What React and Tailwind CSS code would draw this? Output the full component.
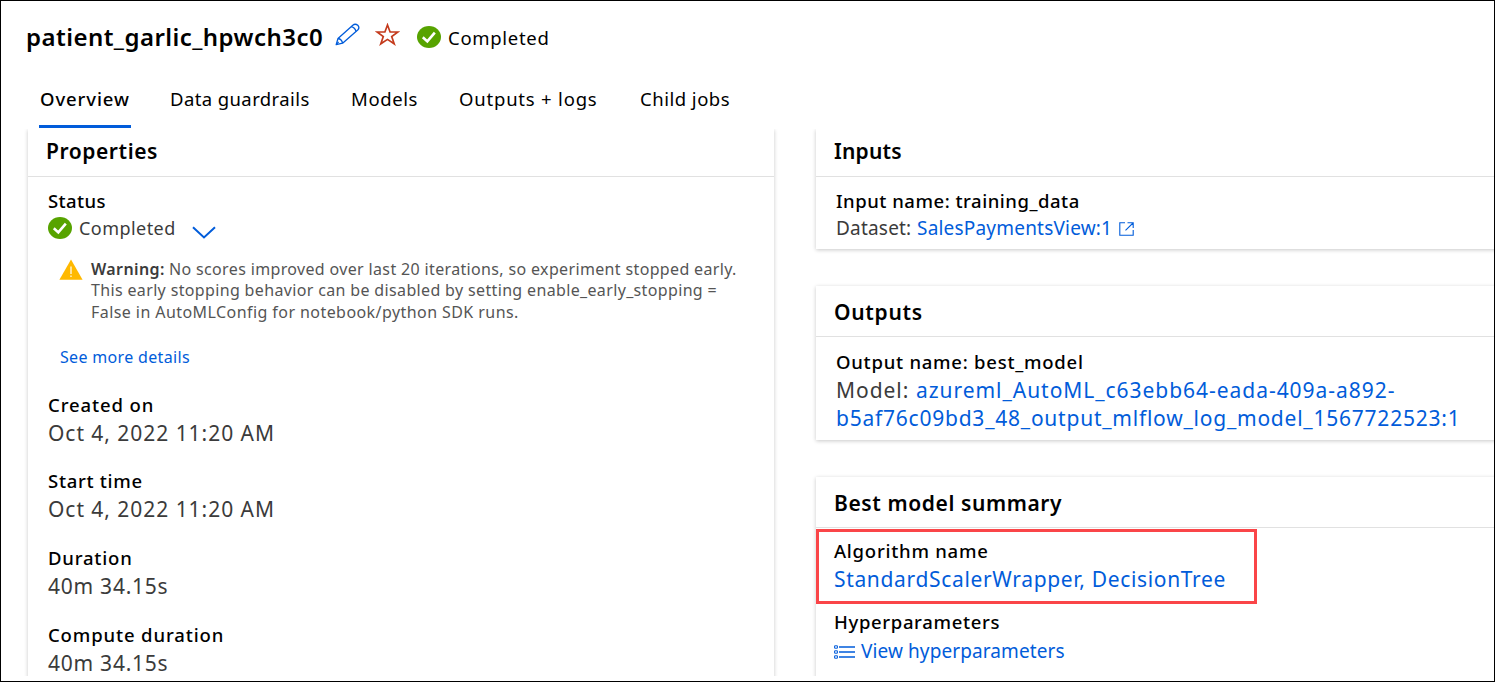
import React from "react";

function Check({ className }) {
  return (
    <svg viewBox="0 0 24 22" preserveAspectRatio="none" className={"shrink-0 " + className}>
      <ellipse cx="12" cy="11" rx="12" ry="11" fill="#57a300" />
      <path d="M5.8 11.3 L10.3 15.4 L17.8 6.6" fill="none" stroke="#fff" strokeWidth="2.6" />
    </svg>
  );
}

function Card({ title, spacing, className, children }) {
  return (
    <section className={"bg-white shadow-[0_1px_4px_rgba(0,0,0,0.22)] " + className}>
      <h2 className={"flex items-center border-b border-[#e1e1e1] pl-[18px] text-[21px] font-semibold " + spacing}>{title}</h2>
      {children}
    </section>
  );
}

function Property({ label, labelSpacing, value, valueSpacing }) {
  return (
    <div>
      <div className={"h-7 text-[18.5px] leading-[27px] font-medium " + labelSpacing}>{label}</div>
      <div className={"h-7 text-[21px] leading-[29px] text-[#3b3b3b] " + valueSpacing}>{value}</div>
    </div>
  );
}

export default function App() {
  return (
    <div className="flex h-[682px] w-[1495px] flex-col overflow-hidden border border-black bg-white pb-[5px] font-['Noto_Sans','Open_Sans',sans-serif] whitespace-nowrap text-black">
      <header className="flex h-[73px] shrink-0 pl-[25px]">
        <h1 className="mt-[18px] h-9 w-[309px] text-[24px] leading-9 font-semibold tracking-[0.45px]">patient_garlic_hpwch3c0</h1>
        <svg viewBox="0 0 25 23" className="mt-[22px] h-[23px] w-[25px]" fill="none" stroke="#015cda" strokeWidth="1.3" strokeLinejoin="round">
          <path d="M1.2 21.6 L3 15.5 L17.8 2.2 Q20.2 0.2 22.8 2.3 Q25 4.7 22.7 7 L7.6 20.2 Z" />
          <path d="M3 15.5 Q6.8 16.2 7.6 20.2 M16.2 3.6 Q20 4.6 21 8.4 M1.4 21.4 L3.6 18.8" />
        </svg>
        <svg viewBox="0 0 25 23" className="mt-[22px] ml-[15px] h-[23px] w-[25px]" fill="none" stroke="#c43a1c" strokeWidth="1.7">
          <path d="M12.5 2 L15.1 9 L23 9 L16.7 13.6 L19.2 20.8 L12.5 16.4 L5.8 20.8 L8.3 13.6 L2 9 L9.9 9 Z" />
        </svg>
        <Check className="mt-[25px] ml-[17px] h-[22px] w-[24px]" />
        <span className="mt-[23px] ml-[7px] text-[18.5px] leading-7 tracking-[0.7px]">Completed</span>
      </header>

      <nav className="flex h-[55px] shrink-0 pl-[38px] text-[18.5px] leading-[50px]">
        <span className="h-[54px] w-[92px] border-b-3 border-[#015cda] pl-px font-medium tracking-[0.9px]">Overview</span>
        <span className="ml-[39px] w-[181px] tracking-[0.4px]">Data guardrails</span>
        <span className="w-[108px] tracking-[0.6px]">Models</span>
        <span className="w-[181px] tracking-[0.8px]">Outputs + logs</span>
        <span className="tracking-[0.5px]">Child jobs</span>
      </nav>

      <main className="flex min-h-0 grow items-start gap-[42px] overflow-hidden pl-[27px]">
        <Card title="Properties" spacing="h-[48px] pb-[2px] tracking-[0.57px]" className="h-[600px] w-[746px] shrink-0">
          <div className="pt-[9.5px] pl-5">
            <div className="h-7 text-[18.5px] leading-7 font-medium tracking-[0.4px]">Status</div>
            <div className="flex h-[27px] items-center text-[18px] text-[#3b3b3b]">
              <Check className="h-[22px] w-[24px]" />
              <span className="ml-[7px] w-[113px] tracking-[0.45px]">Completed</span>
              <svg viewBox="0 0 24 13" className="mt-[8px] h-[13px] w-6" fill="none" stroke="#015cda" strokeWidth="2">
                <path d="M1 1.2 L12 11.5 L23 1.2" />
              </svg>
            </div>
            <div className="mt-[17px] flex pl-[11px] text-[16px] leading-[21.5px] text-[#555]">
              <svg viewBox="0 0 24 21" className="h-[21px] w-6 shrink-0">
                <path d="M12 0.5 L23.6 20.8 H0.4 Z" fill="#ffb900" />
                <path d="M12 7.5 V15 M12 16.6 V18" stroke="#fff" strokeWidth="1.2" />
              </svg>
              <div className="ml-[8px]">
                <div className="flex">
                  <span className="w-[78px] font-semibold tracking-[0.4px] text-[#3b3b3b]">Warning:</span>
                  <span className="tracking-[0.35px]">No scores improved over last 20 iterations, so experiment stopped early.</span>
                </div>
                <div className="tracking-[0.35px]">This early stopping behavior can be disabled by setting enable_early_stopping =</div>
                <div className="tracking-[0.43px]">False in AutoMLConfig for notebook/python SDK runs.</div>
              </div>
            </div>
            <div className="mt-[22px] pl-3 text-[16px] leading-6 tracking-[0.33px] text-[#015cda]">See more details</div>
            <div className="mt-[21.5px] flex flex-col gap-[20.7px]">
              <Property label="Created on" labelSpacing="tracking-[0.9px]" value="Oct 4, 2022 11:20 AM" valueSpacing="tracking-[0.96px]" />
              <Property label="Start time" labelSpacing="tracking-[0.7px]" value="Oct 4, 2022 11:20 AM" valueSpacing="tracking-[0.96px]" />
              <Property label="Duration" labelSpacing="tracking-[0.8px]" value="40m 34.15s" valueSpacing="tracking-[0.75px]" />
              <Property label="Compute duration" labelSpacing="tracking-[0.87px]" value="40m 34.15s" valueSpacing="tracking-[0.75px]" />
            </div>
          </div>
        </Card>

        <div className="flex w-[700px] shrink-0 flex-col gap-[37px]">
          <Card title="Inputs" spacing="h-[48px] pb-[2px] tracking-[0.2px]" className="h-[120px]">
            <div className="pt-[10px] pl-5">
              <div className="h-[27px] text-[18.5px] leading-[27px] font-medium tracking-[0.52px]">Input name: training_data</div>
              <div className="flex h-7 items-center text-[19px] text-[#3b3b3b]">
                <span className="w-[81px] tracking-[0.2px]">Dataset:</span>
                <span className="w-[202px] tracking-[0.2px] text-[#015cda]">SalesPaymentsView:1</span>
                <svg viewBox="0 0 15 14" className="mt-[1px] h-[14px] w-[15px]" fill="none" stroke="#015cda" strokeWidth="1.1">
                  <path d="M6 0.8 H0.8 V13.2 H14.2 V8 M8.5 0.8 H14.2 V6 M14 1 L6.5 8.3" />
                </svg>
              </div>
            </div>
          </Card>

          <Card title="Outputs" spacing="h-[51px] pt-[4px] tracking-[0.7px]" className="h-[154px]">
            <div className="pt-[11px] pl-5">
              <div className="h-7 text-[18.5px] leading-[27px] font-medium tracking-[0.75px]">Output name: best_model</div>
              <div className="flex h-[28px] text-[21px] leading-[29px]">
                <span className="w-[80px] tracking-[0.95px] text-[#3b3b3b]">Model:</span>
                <span className="tracking-[0.96px] text-[#015cda]">azureml_AutoML_c63ebb64-eada-409a-a892-</span>
              </div>
              <div className="h-7 text-[21px] leading-7 tracking-[0.77px] text-[#015cda]">b5af76c09bd3_48_output_mlflow_log_model_1567722523:1</div>
            </div>
          </Card>

          <Card title="Best model summary" spacing="h-[51px] pt-[4px] tracking-[0.6px]" className="h-[240px]">
            <div className="mt-px h-[75px] w-[441px] border-3 border-[#fa4548] pt-[5px] pl-[15px]">
              <div className="h-7 text-[18.5px] leading-[27px] font-medium tracking-[0.75px]">Algorithm name</div>
              <div className="h-7 text-[21px] leading-[29px] tracking-[0.66px] text-[#015cda]">StandardScalerWrapper, DecisionTree</div>
            </div>
            <div className="pt-[4px] pl-[18px]">
              <div className="h-7 text-[18.5px] leading-7 font-medium tracking-[0.65px]">Hyperparameters</div>
              <div className="flex h-[29px] items-center text-[19px] text-[#015cda]">
                <svg viewBox="0 0 21 14" className="mt-[3px] h-[14px] w-[21px]" fill="none" stroke="#015cda" strokeWidth="1">
                  <path d="M0.6 0.8 H3.4 V3.2 H0.6 Z M0.6 5.8 H3.4 V8.2 H0.6 Z M0.6 10.8 H3.4 V13.2 H0.6 Z" />
                  <path d="M5 2 H21 M5 7 H21 M5 12 H21" strokeWidth="1.3" />
                </svg>
                <span className="mt-px ml-[6px] tracking-[0.1px]">View hyperparameters</span>
              </div>
            </div>
          </Card>
        </div>
      </main>
    </div>
  );
}
